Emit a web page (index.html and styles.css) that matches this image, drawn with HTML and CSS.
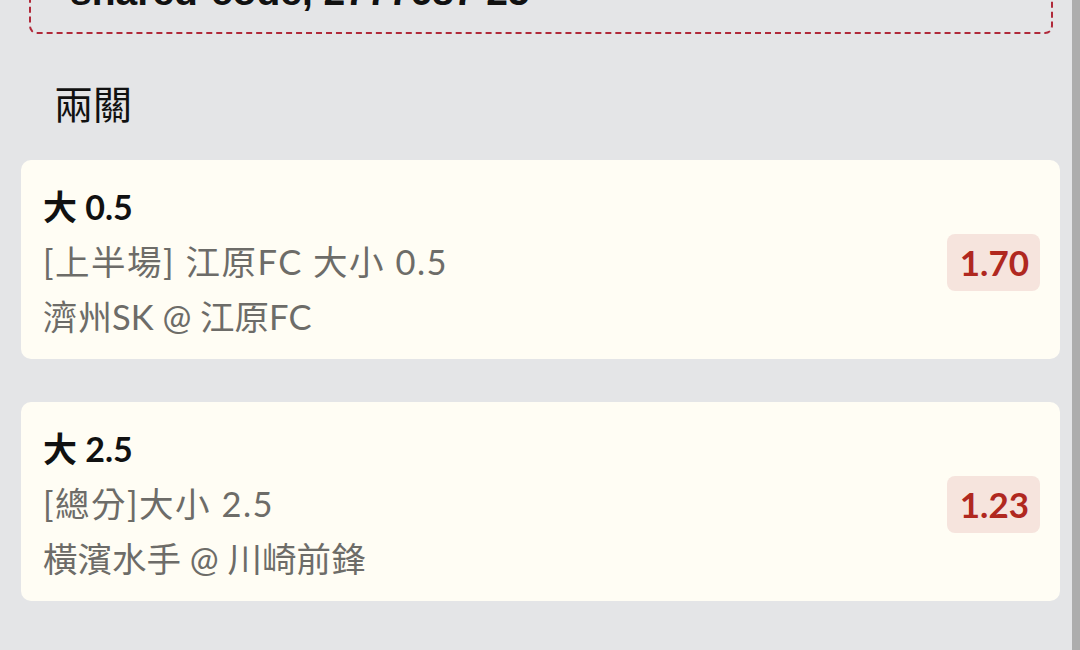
FILE: index.html
```html
<!DOCTYPE html>
<html lang="zh-Hant">
<head>
    <meta charset="UTF-8">
    <title>兩關</title>
    <link rel="stylesheet" href="styles.css">
</head>
<body>
    <div class="screen">
        <div class="share-box">
            <span class="share-code">shared-code, 2777687 25</span>
        </div>

        <h2 class="group-title">兩關</h2>

        <div class="bet-card">
            <div class="bet-info">
                <div class="bet-pick">大 0.5</div>
                <div class="bet-market">[上半場] 江原FC 大小 0.5</div>
                <div class="bet-match">濟州SK @ 江原FC</div>
            </div>
            <div class="bet-odds">1.70</div>
        </div>

        <div class="bet-card">
            <div class="bet-info">
                <div class="bet-pick">大 2.5</div>
                <div class="bet-market">[總分]大小 2.5</div>
                <div class="bet-match">橫濱水手 @ 川崎前鋒</div>
            </div>
            <div class="bet-odds">1.23</div>
        </div>
    </div>

    <div class="scrollbar"></div>
</body>
</html>
```

FILE: styles.css
```css
body {
    margin: 0;
    background: #e4e5e7;
    font-family: Lato, "Noto Sans CJK TC", sans-serif;
    overflow: hidden;
}

.screen {
    padding: 0 20px 0 21px;
}

.share-box {
    margin: -45px 7px 0 8px;
    padding: 13px 39px 19px;
    border: 2px dashed #b0293a;
    border-radius: 8px;
}

.share-code {
    font-family: "Liberation Sans", Arial, sans-serif;
    font-weight: bold;
    font-size: 39px;
    line-height: 43px;
    color: #111;
}

.group-title {
    margin: 43px 0 33px 33px;
    font-family: "Noto Sans CJK TC", sans-serif;
    font-weight: normal;
    font-size: 39px;
    line-height: 50px;
    color: #111;
}

.bet-card {
    display: flex;
    align-items: center;
    justify-content: space-between;
    background: #fffdf4;
    border-radius: 10px;
    padding: 19px 20px 15px 22px;
    margin-bottom: 43px;
}

.bet-info {
    font-size: 34.5px;
    line-height: 55px;
}

.bet-pick {
    font-size: 34px;
    font-weight: bold;
    color: #111;
}

.bet-market,
.bet-match {
    color: #6d6c68;
}

.bet-market {
    letter-spacing: 1.5px;
}

.bet-odds {
    background: #f6e4dd;
    color: #b0281f;
    font-weight: bold;
    font-size: 35px;
    line-height: 39px;
    padding: 9px 11px 9px 13px;
    border-radius: 8px;
    margin-top: 2px;
}

.scrollbar {
    position: fixed;
    top: 0;
    right: 0;
    width: 8px;
    height: 100%;
    background: #adadad;
}
```
